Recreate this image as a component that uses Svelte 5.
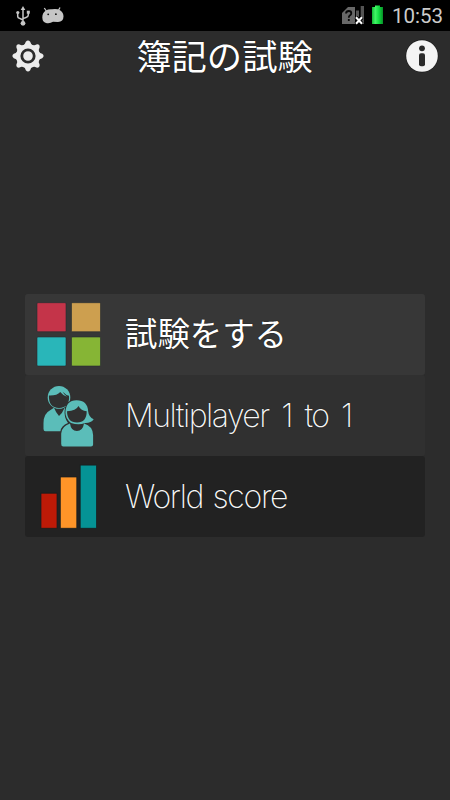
<script>
	const items = [
		{ id: "exam", label: "試験をする" },
		{ id: "multi", label: "Multiplayer 1 to 1" },
		{ id: "score", label: "World score" },
	]
</script>

<div class="screen">
	<div class="status">
		<svg class="usb" width="14" height="20" viewBox="0 0 14 20">
			<g fill="none" stroke="#c6c6c6" stroke-width="1.5">
				<path d="M7 3V17M1.7 7V10.2Q1.7 12 4 12.5L7 14M12.3 7V9Q12.3 10.8 10 11.5L7 12.6" />
			</g>
			<g fill="#c6c6c6">
				<path d="M7 0L9.3 4H4.7Z" />
				<circle cx="1.8" cy="6.5" r="1.6" />
				<rect x="10.8" y="4.7" width="3" height="3" />
				<circle cx="7" cy="17.3" r="2.4" />
			</g>
		</svg>
		<svg class="droid" width="22" height="17" viewBox="0 0 22 17">
			<path d="M2.3 1L5 5M18 .5L16.4 3.5" stroke="#c6c6c6" stroke-width="1.3" />
			<path fill="#c6c6c6" d="M4 3.5Q6 1.9 10 2.2Q15 1.3 18 3.3Q21.6 5.7 21.5 9.5Q21.4 14.8 16 15L11 14.8Q8 16.8 4 16Q.5 15 .3 10.5Q.3 5.5 4 3.5Z" />
			<circle cx="6.2" cy="7.3" r=".9" fill="#111" />
			<circle cx="13.9" cy="7.2" r=".9" fill="#111" />
		</svg>
		<span class="gap"></span>
		<svg class="sim" width="23" height="19" viewBox="0 0 23 19">
			<path fill="#686868" d="M0 18V7L6 1H13V18Z" />
			<path fill="#555" d="M14 4.5H17V18H14ZM18.7 0H22V18H18.7Z" />
			<path d="M4 7.5Q4.2 5 6.8 5Q9.3 5 9.3 7.2Q9.3 8.5 7.8 9.5Q6.8 10.2 6.8 11.7M6.8 13V15" fill="none" stroke="#080808" stroke-width="1.8" />
			<path d="M14 11.3L20 17.8M20 11.3L14 17.8" stroke="#000" stroke-width="4" />
			<path d="M14 11.3L20 17.8M20 11.3L14 17.8" stroke="#fff" stroke-width="2" />
		</svg>
		<svg class="battery" width="11" height="20" viewBox="0 0 11 20">
			<defs>
				<linearGradient id="charge">
					<stop offset="0" stop-color="#12b735" />
					<stop offset=".3" stop-color="#42f566" />
					<stop offset=".6" stop-color="#14df43" />
					<stop offset="1" stop-color="#069127" />
				</linearGradient>
			</defs>
			<path fill="url(#charge)" d="M0 2H3V.5H8V2H11V19H0Z" />
		</svg>
		<span class="clock">10:53</span>
	</div>

	<header>
		<svg width="32" height="32" viewBox="-16 -16 32 32">
			<g fill="#ececec">
				<circle r="12" />
				{#each [0, 45, 90, 135, 180, 225, 270, 315] as angle}
					<path transform="rotate({angle})" d="M-5.4 -9.5Q-2.8 -11.7 -2.2 -14.2Q0 -17 2.2 -14.2Q2.8 -11.7 5.4 -9.5Z" />
				{/each}
			</g>
			<circle r="6.2" fill="none" stroke="#2c2c2c" stroke-width="2.8" />
		</svg>
		<h1>簿記の試験</h1>
		<svg width="34" height="34" viewBox="0 0 34 34">
			<circle cx="17" cy="17" r="16.4" fill="#181818" />
			<circle cx="17" cy="17" r="15.8" fill="#f4f4f4" />
			<circle cx="17" cy="9.3" r="2.9" fill="#2b2b2b" />
			<rect x="14" y="14.2" width="6" height="13" rx="2" fill="#2b2b2b" />
		</svg>
	</header>

	<nav>
		{#each items as item}
			<button class={item.id}>
				<svg width="80" height="81" viewBox="0 0 80 81">
					{#if item.id == "exam"}
						<g stroke="#252c30" stroke-width=".6">
							<rect x="12" y="8.7" width="29" height="29" rx="1" fill="#c43449" />
							<rect x="46.5" y="8.7" width="29" height="29" rx="1" fill="#cd9f4f" />
							<rect x="12" y="43" width="29" height="29" rx="1" fill="#29b6b9" />
							<rect x="46.5" y="43" width="29" height="29" rx="1" fill="#86b535" />
						</g>
					{:else if item.id == "multi"}
						<!-- man behind -->
						<path fill="#5bbdb9" d="M18.5 54V48Q18.5 38.5 25.5 35L29 32.8Q31 38 34 41Q37.5 38 39.5 33L48 38V56.2H20.5Q18.5 56.2 18.5 54Z" />
						<ellipse cx="34" cy="22.4" rx="11.3" ry="11.4" fill="#5bbdb9" />
						<path fill="#303030" d="M23.9 20.5Q32 20.8 35.2 17Q38 20.5 42 21.8Q38.7 19.3 37.7 16.8Q41 20.3 44 20.8Q44.8 32.9 34 32.9Q23.5 32.9 23.9 20.5Z" />
						<!-- woman in front -->
						<path fill="#303030" d="M35.4 72V56.5Q36 50.5 43 48Q38.7 42 39.7 35Q41 24.3 51.5 24.3Q62.5 24.3 63.8 35.5Q65 41 69 43Q67 48.5 61 48.5Q68 51 69 58V72Z" />
						<path fill="#5bbdb9" d="M36.2 69V58.5Q36.7 51.2 45 48.5Q46 56 51.9 56Q57.8 56 59 48.5Q67.7 51 68.1 60V69.5Q68.1 71.5 66 71.5H38.3Q36.2 71.5 36.2 69ZM40.4 37.5Q41 25.2 51.5 25.2Q62.5 25.2 63.2 36.5Q63.7 42 68.7 44.2Q66 48.2 60 48Q54 50.5 46 48Q40.4 43.5 40.4 37.5Z" />
						<path fill="#303030" d="M42 36.2Q51 36 53.5 31Q56 35.8 61.7 36.2Q61.7 47.4 52 47.5Q42.2 47.4 42 36.2Z" />
					{:else}
						<g stroke="#171c1d" stroke-width=".7">
							<rect x="16" y="37.2" width="16" height="35" fill="#bd1a07" />
							<rect x="35.3" y="21" width="16.5" height="51.2" fill="#ff9528" />
							<rect x="55.2" y="9.1" width="16.3" height="63.1" fill="#059395" />
						</g>
					{/if}
				</svg>
				<span>{item.label}</span>
			</button>
		{/each}
	</nav>
</div>

<style>
	:global(body) {
		margin: 0;
		background: #2c2c2c;
	}

	.screen {
		width: 450px;
		height: 800px;
		background: #2c2c2c;
		color: #fff;
		overflow: hidden;
	}

	.status {
		display: flex;
		height: 31px;
		box-sizing: border-box;
		background: #000;
		padding: 5px 8px 0 16px;
	}

	.usb {
		margin-top: 1px;
	}

	.droid {
		margin: 2px 0 0 12px;
	}

	.gap {
		flex: 1;
	}

	.sim {
		margin-top: 1px;
	}

	.battery {
		margin: 0 9px 0 7px;
	}

	.clock {
		width: 50px;
		font: 20.5px/22px Roboto, sans-serif;
		color: #ccc;
		white-space: nowrap;
	}

	header {
		display: flex;
		align-items: center;
		justify-content: space-between;
		height: 50px;
		padding: 0 11px 0 12px;
	}

	h1 {
		margin: 0;
		font: 400 35.3px/48px "Noto Sans CJK JP", sans-serif;
		padding-bottom: 2px;
		text-shadow: 0 0 1px #000;
	}

	nav {
		display: flex;
		flex-direction: column;
		width: 400px;
		margin: 213px 0 0 25px;
	}

	button {
		display: flex;
		align-items: center;
		height: 81px;
		padding: 0;
		border: 0;
		border-radius: 3px;
		color: #f5f5f5;
		font: 200 32px/79px Inter, sans-serif;
		text-shadow: 0 0 1px #000;
		white-space: nowrap;
	}

	button span {
		margin-left: 20px;
	}

	.exam {
		background: #373737;
		color: #fff;
		font: 400 32.4px/75px "Noto Sans CJK JP", sans-serif;
	}

	.exam span {
		padding-bottom: 6px;
	}

	.multi {
		background: #303030;
		letter-spacing: -1.5px;
		word-spacing: 5px;
	}

	.score {
		background: #222;
		letter-spacing: -1.3px;
		word-spacing: 1.5px;
	}
</style>
